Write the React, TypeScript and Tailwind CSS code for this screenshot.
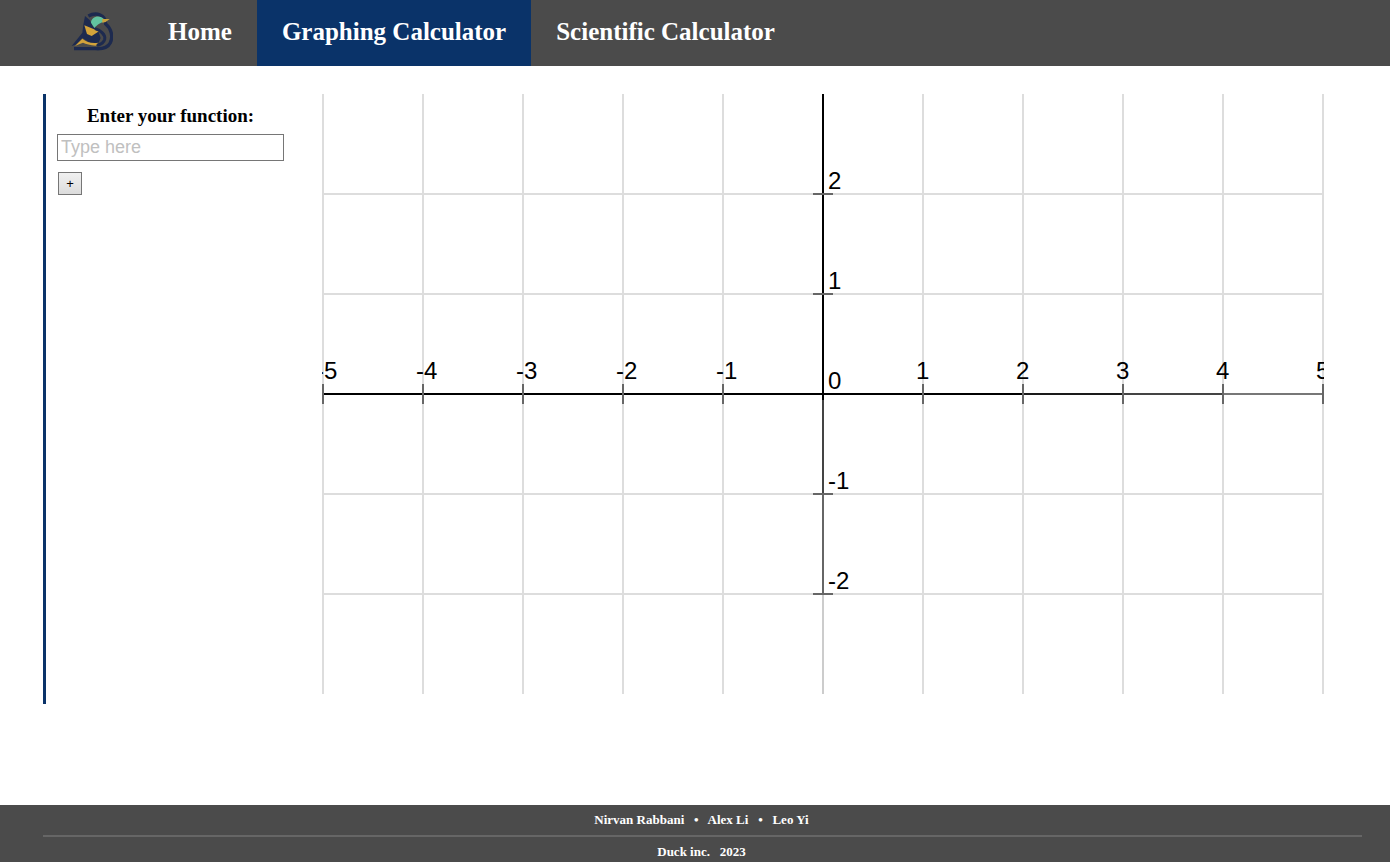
const xTicks = [-5, -4, -3, -2, -1, 1, 2, 3, 4, 5];
const yTicks = [2, 1, -1, -2];

// axes fade out in steps towards the right and the bottom
const xAxisSegments = [
  { from: 0, to: 700, color: "#000000" },
  { from: 700, to: 800, color: "#1a1a1a" },
  { from: 800, to: 900, color: "#444444" },
  { from: 900, to: 1000, color: "#777777" },
];
const yAxisSegments = [
  { from: 0, to: 306, color: "#000000" },
  { from: 306, to: 400, color: "#444444" },
  { from: 400, to: 500, color: "#666666" },
  { from: 500, to: 600, color: "#cccccc" },
];

// graph area is 1000x600, 100px per unit, origin at 500,300
const Graph = () => (
  <svg width="1002" height="600" viewBox="-1 0 1002 600" className="block shrink-0 overflow-hidden">
    {[0, 100, 200, 300, 400, 500, 600, 700, 800, 900, 1000].map((x) => (
      <line key={x} x1={x} y1="0" x2={x} y2="600" stroke="#dddddd" strokeWidth="2" />
    ))}
    {[100, 200, 400, 500].map((y) => (
      <line key={y} x1="0" y1={y} x2="1000" y2={y} stroke="#dddddd" strokeWidth="2" />
    ))}
    {xAxisSegments.map((s) => (
      <rect key={s.from} x={s.from} y="299" width={s.to - s.from} height="2" fill={s.color} />
    ))}
    {yAxisSegments.map((s) => (
      <rect key={s.from} x="499" y={s.from} width="2" height={s.to - s.from} fill={s.color} />
    ))}
    {xTicks.map((n) => {
      const x = (n + 5) * 100;
      return <line key={n} x1={x} y1="290" x2={x} y2="310" stroke="#666666" strokeWidth="2" />;
    })}
    {yTicks.map((n) => {
      const y = 300 - n * 100;
      return <line key={n} x1="490" y1={y} x2="510" y2={y} stroke="#666666" strokeWidth="2" />;
    })}
    <g fill="#000000" fontSize="24" fontFamily='"Liberation Sans", Arial, sans-serif'>
      {xTicks.map((n) => (
        <text key={n} x={(n + 5) * 100 - 7} y="285">
          {n}
        </text>
      ))}
      <text x="505" y="295">0</text>
      {yTicks.map((n) => (
        <text key={n} x="505" y={295 - n * 100}>
          {n}
        </text>
      ))}
    </g>
  </svg>
);

const Logo = () => (
  <svg width="42" height="40" viewBox="66 30 126 120" className="block">
    <path d="M108 42 L103 68 L100 92 L68 132 L80 128 L100 108 L125 124 L148 124 L155 108 L148 88 L130 70 L122 54 Z" fill="#1d2a4f" />
    <path d="M106 70 L150 88 L128 102 L114 96 Z" fill="#d3a33b" />
    <path d="M78 132 L100 110 Q118 126 148 122 L140 131 Q115 128 102 122 Q90 126 78 132 Z" fill="#d3a33b" />
    <path d="M118 42 C140 30 170 36 170 66 C188 80 192 105 184 122 C176 138 155 141 140 140 L75 140" fill="none" stroke="#1d2a4f" strokeWidth="10" />
    <path d="M138 80 C155 85 170 98 167 112 C164 124 152 128 144 130" fill="none" stroke="#1d2a4f" strokeWidth="9" />
    <path d="M126 62 C126 46 148 36 164 50 L165 60 C150 62 142 72 136 78 Z" fill="#62c3a0" />
    <path d="M160 51 L182 51 L170 60 L160 62 Z" fill="#c9a23d" />
  </svg>
);

export default function App() {
  return (
    <div className="flex min-h-[862px] flex-col bg-white font-['Liberation_Serif','Times_New_Roman',serif]">
      <nav className="flex h-[66px] items-center bg-[#4b4b4b] pb-[2px] text-[25px] font-bold text-white">
        <div className="flex w-[143px] justify-end pr-[30px]">
          <Logo />
        </div>
        <a className="flex h-[66px] items-center px-[25px]">Home</a>
        <a className="-mb-[2px] flex h-[66px] items-center bg-[#0a3369] px-[25px] pb-[2px]">Graphing Calculator</a>
        <a className="flex h-[66px] items-center px-[25px]">Scientific Calculator</a>
      </nav>

      <main className="flex flex-1 items-start pl-[43px] pt-[28px]">
        <aside className="h-[610px] w-[279px] shrink-0 border-l-[3px] border-[#0a3369] pl-[11px]">
          <h2 className="mt-[10px] w-[227px] text-center text-[19px] font-bold leading-[24px] text-black">
            Enter your function:
          </h2>
          <input
            readOnly
            placeholder="Type here"
            className="mt-[6px] block h-[27px] w-[227px] border border-[#767676] px-[3px] font-['Liberation_Sans',Arial,sans-serif] text-[18px] text-black placeholder:text-[#c0c0c0] focus:outline-none"
          />
          <button className="ml-px mt-[11px] block h-[23px] w-[24px] rounded-none border border-[#767676] bg-gradient-to-b from-[#f0f0f0] to-[#dcdcdc] font-['Liberation_Sans',Arial,sans-serif] text-[13px] leading-none text-black">
            +
          </button>
        </aside>
        <Graph />
      </main>

      <footer className="flex h-[57px] flex-col overflow-hidden bg-[#4b4b4b] pl-[43px] pr-[28px] text-[13px] font-bold text-white">
        <p className="flex h-[30px] shrink-0 items-center justify-center whitespace-pre pr-[2px]">
          {"Nirvan Rabbani   •   Alex Li   •   Leo Yi"}
        </p>
        <hr className="shrink-0 border-t-2 border-[#666666]" />
        <p className="flex h-[29px] shrink-0 items-center justify-center whitespace-pre pr-[2px]">{"Duck inc.   2023"}</p>
      </footer>
    </div>
  );
}
